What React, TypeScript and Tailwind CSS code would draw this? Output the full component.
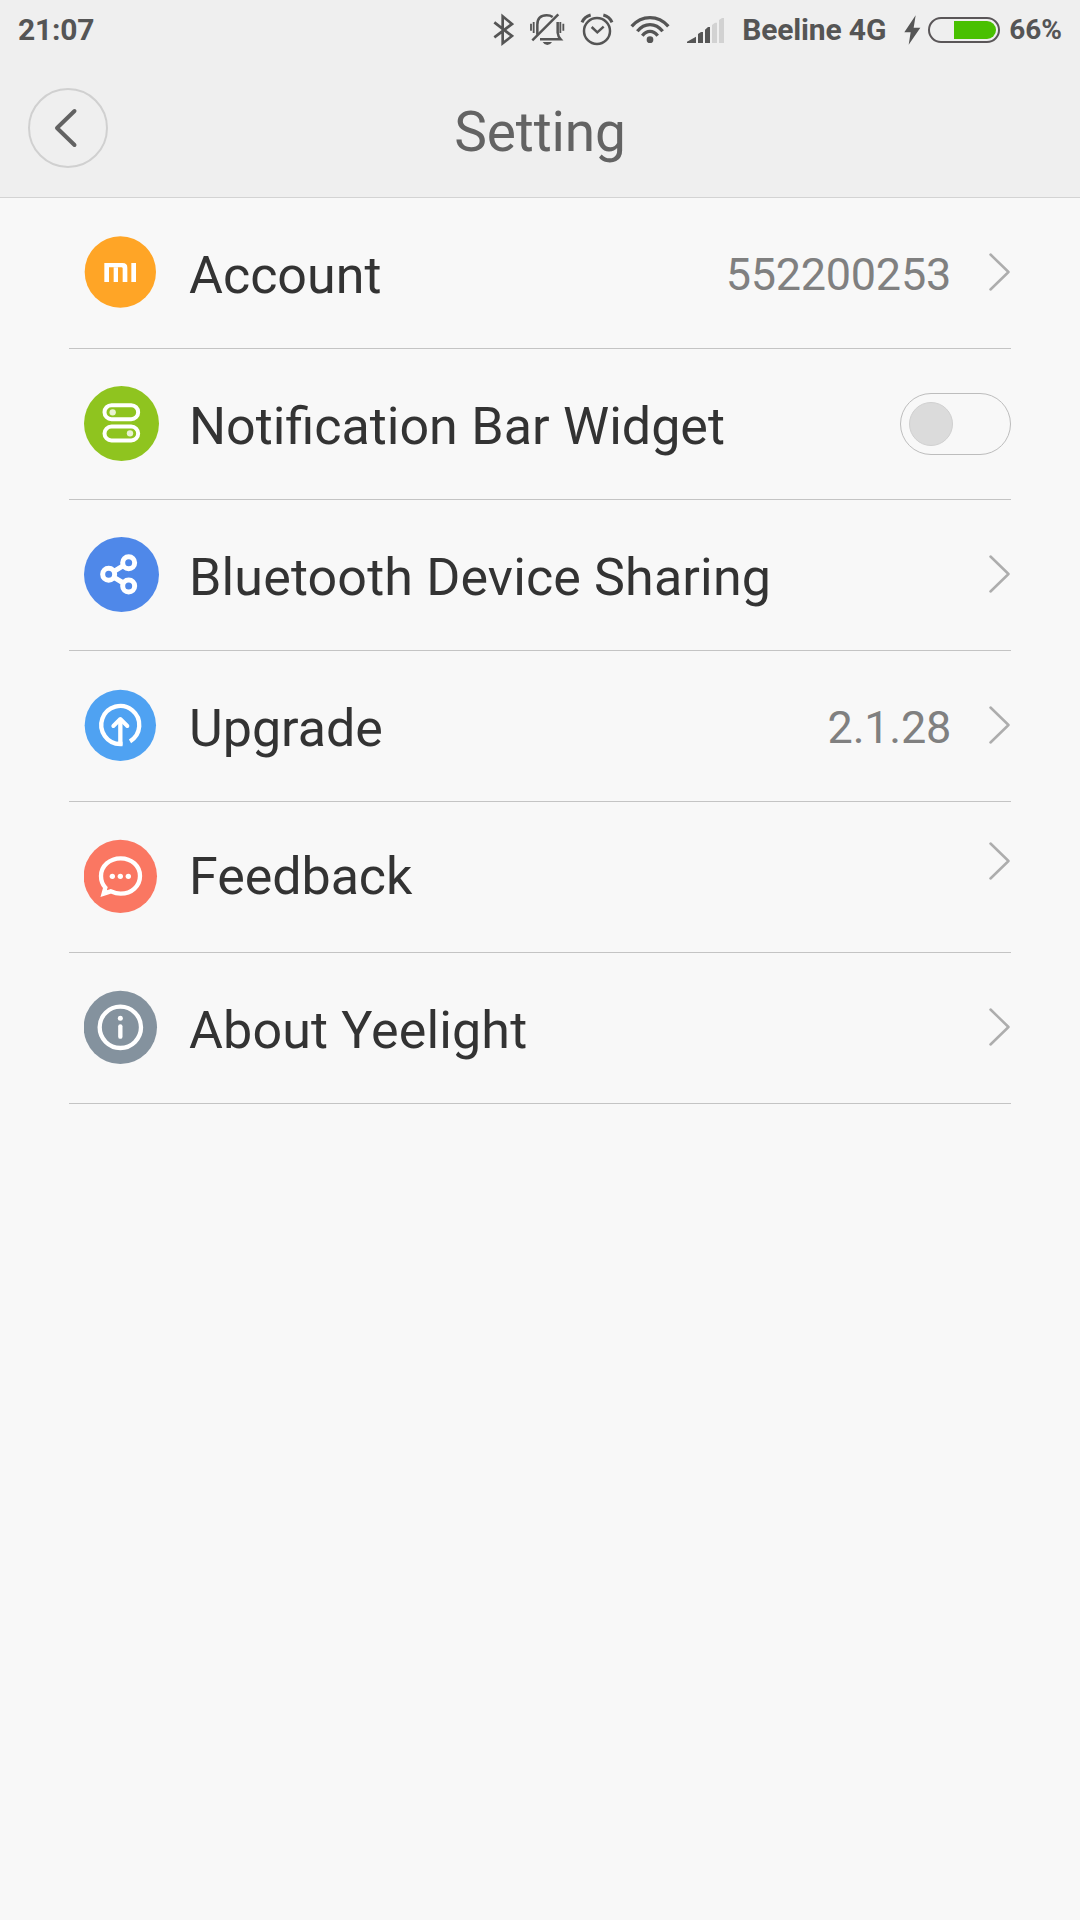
import React from "react";

const icons = {
  account: (
    <>
      <circle cx="109" cy="111" r="107" fill="#ffa526" />
      <g fill="#fff">
        <path d="M61 84h55q14 0 14 14v43h-14V100q0-3-4-3H75v44H61z" />
        <path d="M89 97h13v44H89zM142 84h14v57h-14z" />
      </g>
    </>
  ),
  widget: (
    <>
      <circle cx="112.5" cy="112.5" r="112.5" fill="#8fc41f" />
      <g fill="none" stroke="#fff" strokeWidth="12">
        <rect x="61.5" y="57.5" width="101" height="42" rx="21" />
        <rect x="61.5" y="121.5" width="101" height="42" rx="21" />
      </g>
      <circle cx="86" cy="79" r="9.5" fill="#e9f3d2" />
      <circle cx="138" cy="142" r="9.5" fill="#e9f3d2" />
    </>
  ),
  share: (
    <>
      <circle cx="112.5" cy="112.5" r="112.5" fill="#4f88e9" />
      <g fill="none" stroke="#fff" strokeWidth="15">
        <path d="M90 103l28-17M90 121l28 17" />
        <circle cx="74" cy="112" r="18" />
        <circle cx="134" cy="77" r="18" />
        <circle cx="134" cy="147" r="18" />
      </g>
    </>
  ),
  upgrade: (
    <>
      <circle cx="109" cy="112" r="107" fill="#4fa2f2" />
      <g fill="none" stroke="#fff" strokeWidth="13">
        <path d="M115.500 168H109A57 57 0 1 1 138 160" />
        <path d="M109 172V94" />
        <path d="M88 114l21-21 21 21" strokeLinecap="round" strokeLinejoin="round" strokeWidth="12" />
      </g>
    </>
  ),
  feedback: (
    <>
      <circle cx="109" cy="112" r="110" fill="#fa7762" />
      <path
        d="M80 157C92 162 101 164 110 164c33 0 58-23 58-53s-25-53-58-53-59 23-59 53c0 15 5 26 13 35l-5 18z"
        fill="none"
        stroke="#fff"
        strokeWidth="13"
      />
      <g fill="#fff">
        <circle cx="85" cy="112" r="8" />
        <circle cx="109" cy="112" r="8" />
        <circle cx="133" cy="112" r="8" />
      </g>
    </>
  ),
  about: (
    <>
      <circle cx="109" cy="112" r="110" fill="#84929e" />
      <circle cx="109" cy="112" r="62" fill="none" stroke="#fff" strokeWidth="13" />
      <circle cx="109" cy="85" r="7.500" fill="#fff" />
      <path d="M109 109v31" stroke="#fff" strokeWidth="13" strokeLinecap="round" />
    </>
  ),
};

type Item = {
  icon: keyof typeof icons;
  label: string;
  value?: string;
  toggle?: boolean;
  labelClass?: string;
  arrowClass?: string;
};

const items: Item[] = [
  { icon: "account", label: "Account", value: "552200253" },
  { icon: "widget", label: "Notification Bar Widget", toggle: true, labelClass: "pt-[6px] [word-spacing:0.6px]" },
  { icon: "share", label: "Bluetooth Device Sharing", labelClass: "pt-[6px] tracking-[0.15px]" },
  { icon: "upgrade", label: "Upgrade", value: "2.1.28" },
  { icon: "feedback", label: "Feedback", labelClass: "tracking-[-0.05px]", arrowClass: "mb-[33px]" },
  { icon: "about", label: "About Yeelight", labelClass: "pt-[6px] tracking-[0.15px]" },
];

function StatusBar() {
  return (
    <div className="flex h-[60px] items-center pr-[18px] pl-[18px] text-[30px] font-bold text-[#555]">
      <span className="leading-[60px] tracking-[-0.2px]">21:07</span>
      <div className="ml-auto flex h-[60px] items-center">
        <svg viewBox="0 0 63 180" className="h-[60px] w-[21px]" fill="none" stroke="#555" strokeWidth="8">
          <path d="M4 67l53 41-28 22V49l28 23L4 112" />
        </svg>
        <svg viewBox="0 0 108 180" className="ml-[15px] h-[60px] w-[36px]" fill="none" stroke="#555" strokeWidth="7.500">
          <path d="M6 71v21M14 66v33M94 66v33M103 71v21" strokeWidth="5.500" />
          <path d="M25 104V74C25 54 36 46 53 46q11 0 18 5M86 66V98q1 11 9 20H33" />
          <path d="M88 43L10 121" />
          <path d="M41 126h28q-5 9-14 9t-14-9z" fill="#555" stroke="none" />
        </svg>
        <svg viewBox="0 0 102 180" className="ml-[15px] h-[60px] w-[34px]" fill="none" stroke="#555" strokeWidth="7.500">
          <circle cx="51" cy="93" r="39" />
          <path d="M35 81l17 16 19-17" />
          <path d="M6 67Q13 50 32 45M96 67Q89 50 70 45" strokeWidth="9" />
        </svg>
        <svg viewBox="0 0 120 180" className="ml-[16px] h-[60px] w-[40px]" fill="none" stroke="#555" strokeWidth="10">
          <path d="M5 79Q28 53 60 53t55 26" />
          <path d="M22 94Q38 74 60 74t38 20" />
          <path d="M37 107Q47 94 60 94t23 13" />
          <circle cx="60" cy="119" r="10" fill="#555" stroke="none" />
        </svg>
        <svg viewBox="0 0 117 180" className="ml-[16px] h-[60px] w-[39px]">
          <path d="M3 129v-4l27-15v19zM36 129v-27l9-6h6v33zM57 129V89l9-8h6v48z" fill="#555" />
          <path d="M78 129V75l9-7h6v61zM99 129V60l9-6h6v75z" fill="#d2d2d2" />
        </svg>
        <span className="ml-[17px] w-[146px] leading-[60px] tracking-[-0.15px] whitespace-nowrap">Beeline 4G</span>
        <svg viewBox="0 0 51 180" className="ml-[16px] h-[60px] w-[17px]">
          <path d="M35 46L1 97h19l-6 37 35-51H29z" fill="#555" />
        </svg>
        <div className="ml-[7px] flex h-[26px] w-[72px] items-center justify-end rounded-full border-2 border-[#5a5658] pr-[2px]">
          <div className="h-[18px] w-[42px] rounded-r-full bg-[#48c000]" />
        </div>
        <span className="ml-[9px] text-[28px] leading-[60px]">66%</span>
      </div>
    </div>
  );
}

function Arrow({ className = "" }: { className?: string }) {
  return (
    <svg viewBox="0 0 22 38" className={`h-[38px] w-[22px] ${className}`}>
      <path
        d="M1.500 1.500L19.500 19l-18 17.500"
        fill="none"
        stroke="#adadad"
        strokeWidth="2.500"
        strokeLinecap="round"
        strokeLinejoin="round"
      />
    </svg>
  );
}

function Row({ item }: { item: Item }) {
  return (
    <li className="flex h-[151px] items-center border-b border-[#c4c4c4] pl-[15px]">
      <svg viewBox="0 0 225 225" className="mb-[2px] h-[75px] w-[75px]">
        {icons[item.icon]}
      </svg>
      <span className={`ml-[30px] text-[52px] leading-[60px] text-[#333] ${item.labelClass ?? "pt-[6px]"}`}>
        {item.label}
      </span>
      <div className="ml-auto flex items-center">
        {item.value && (
          <span className="mr-[38px] pt-[4px] text-[45px] leading-[60px] tracking-[-0.25px] text-[#808080]">
            {item.value}
          </span>
        )}
        {item.toggle ? (
          <button className="flex h-[62px] w-[111px] items-center rounded-full border border-[#bdbdbd] pl-[8px]">
            <span className="h-[44px] w-[44px] rounded-full border border-[#d0d0d0] bg-[#dbdbdb]" />
          </button>
        ) : (
          <Arrow className={item.arrowClass ?? "mb-[3px]"} />
        )}
      </div>
    </li>
  );
}

export default function App() {
  return (
    <div className="min-h-screen bg-[#f8f8f8] font-[Roboto,sans-serif]">
      <header className="h-[198px] border-b border-[#d3d3d3] bg-[#efefef]">
        <StatusBar />
        <div className="flex items-start px-[28px] pt-[28px]">
          <button className="flex h-[80px] w-[80px] items-center justify-center rounded-full border-2 border-[#d0d0d0]">
            <svg viewBox="0 0 24 40" className="mr-[5px] h-[40px] w-[24px]">
              <path
                d="M20.500 3L3 20l17.500 17"
                fill="none"
                stroke="#626262"
                strokeWidth="4"
                strokeLinecap="round"
                strokeLinejoin="round"
              />
            </svg>
          </button>
          <h1 className="mr-[80px] flex-1 pt-[12px] text-center text-[55px] leading-[64px] tracking-[-0.1px] text-[#636363]">
            Setting
          </h1>
        </div>
      </header>
      <ul className="mx-[69px]">
        {items.map((item) => (
          <Row key={item.icon} item={item} />
        ))}
      </ul>
    </div>
  );
}
